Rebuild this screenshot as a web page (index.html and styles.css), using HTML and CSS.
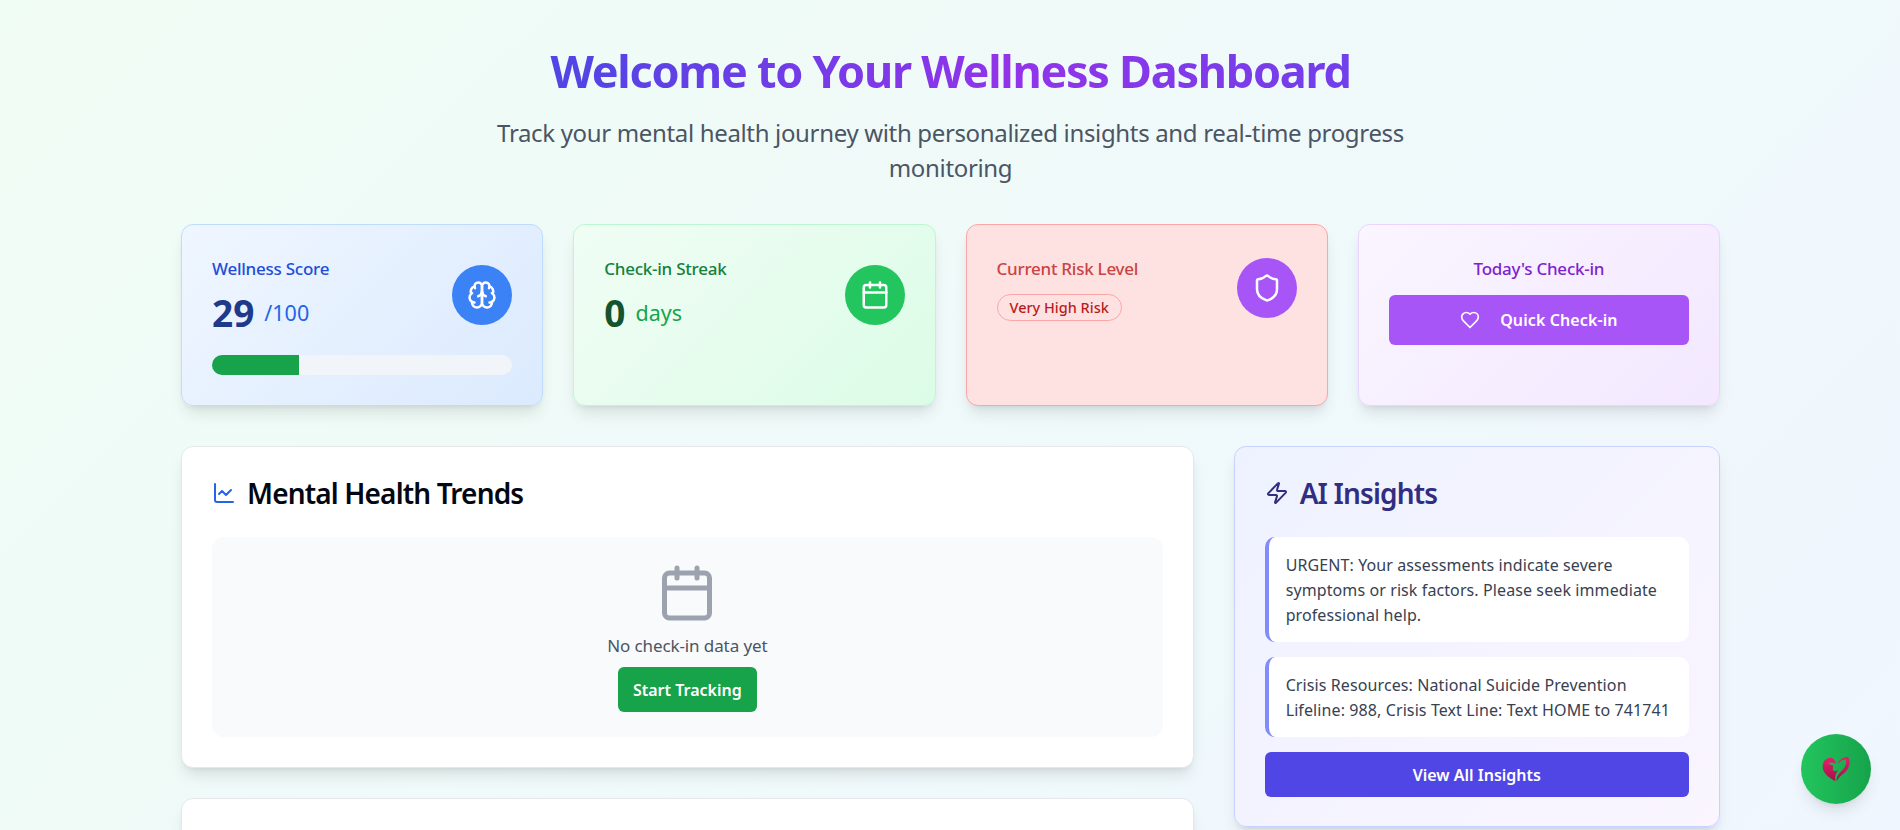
FILE: index.html
```html
<!DOCTYPE html>
<html lang="en">
<head>
    <meta charset="UTF-8">
    <meta name="viewport" content="width=device-width, initial-scale=1.0">
    <title>Wellness Dashboard</title>
    <link rel="stylesheet" href="styles.css">
</head>
<body>
    <div class="page">
        <div class="hero">
            <h1 class="hero-title">Welcome to Your Wellness Dashboard</h1>
            <p class="hero-sub">Track your mental health journey with personalized insights and real-time progress monitoring</p>
        </div>

        <div class="stats">
            <div class="stat stat-blue">
                <div class="stat-top">
                    <div>
                        <div class="stat-label">Wellness Score</div>
                        <div class="stat-value"><strong>29</strong><span>/100</span></div>
                    </div>
                    <div class="stat-icon">
                        <svg viewBox="0 0 24 24"><path d="M12 5a3 3 0 1 0-5.997.125 4 4 0 0 0-2.526 5.77 4 4 0 0 0 .556 6.588A4 4 0 1 0 12 18Z"/><path d="M12 5a3 3 0 1 1 5.997.125 4 4 0 0 1 2.526 5.77 4 4 0 0 1-.556 6.588A4 4 0 1 1 12 18Z"/><path d="M15 13a4.5 4.5 0 0 1-3-4 4.5 4.5 0 0 1-3 4"/><path d="M17.599 6.5a3 3 0 0 0 .399-1.375"/><path d="M6.003 5.125A3 3 0 0 0 6.401 6.5"/><path d="M3.477 10.896a4 4 0 0 1 .585-.396"/><path d="M19.938 10.5a4 4 0 0 1 .585.396"/><path d="M6 18a4 4 0 0 1-1.967-.516"/><path d="M19.967 17.484A4 4 0 0 1 18 18"/></svg>
                    </div>
                </div>
                <div class="progress"><div class="progress-fill" style="width: 29%"></div></div>
            </div>

            <div class="stat stat-green">
                <div class="stat-top">
                    <div>
                        <div class="stat-label">Check-in Streak</div>
                        <div class="stat-value"><strong>0</strong><span>days</span></div>
                    </div>
                    <div class="stat-icon">
                        <svg viewBox="0 0 24 24"><path d="M8 2v4"/><path d="M16 2v4"/><rect width="18" height="18" x="3" y="4" rx="2"/><path d="M3 10h18"/></svg>
                    </div>
                </div>
            </div>

            <div class="stat stat-red">
                <div class="stat-top">
                    <div>
                        <div class="stat-label">Current Risk Level</div>
                        <div class="risk-badge">Very High Risk</div>
                    </div>
                    <div class="stat-icon">
                        <svg viewBox="0 0 24 24"><path d="M20 13c0 5-3.500 7.500-7.660 8.950a1 1 0 0 1-.670-.010C7.500 20.500 4 18 4 13V6a1 1 0 0 1 1-1c2 0 4.500-1.200 6.240-2.720a1.170 1.170 0 0 1 1.520 0C14.510 3.810 17 5 19 5a1 1 0 0 1 1 1z"/></svg>
                    </div>
                </div>
            </div>

            <div class="stat stat-purple">
                <div class="stat-label">Today's Check-in</div>
                <button class="checkin-btn">
                    <svg viewBox="0 0 24 24"><path d="M19 14c1.490-1.460 3-3.210 3-5.500A5.500 5.500 0 0 0 16.500 3c-1.760 0-3 .5-4.500 2-1.500-1.500-2.740-2-4.500-2A5.500 5.500 0 0 0 2 8.500c0 2.300 1.500 4.050 3 5.500l7 7Z"/></svg>
                    Quick Check-in
                </button>
            </div>
        </div>

        <div class="columns">
            <div class="main-col">
                <div class="panel">
                    <h2 class="panel-title">
                        <svg class="title-icon icon-blue" viewBox="0 0 24 24"><path d="M3 3v16a2 2 0 0 0 2 2h16"/><path d="m19 9-5 5-4-4-3 3"/></svg>
                        Mental Health Trends
                    </h2>
                    <div class="empty">
                        <svg class="empty-icon" viewBox="0 0 24 24"><path d="M8 2v4"/><path d="M16 2v4"/><rect width="18" height="18" x="3" y="4" rx="2"/><path d="M3 10h18"/></svg>
                        <p class="empty-text">No check-in data yet</p>
                        <button class="track-btn">Start Tracking</button>
                    </div>
                </div>
                <div class="panel panel-next"></div>
            </div>

            <div class="insights">
                <h2 class="panel-title insights-title">
                    <svg class="title-icon" viewBox="0 0 24 24"><path d="M4 14a1 1 0 0 1-.780-1.630l9.900-10.200a.5.5 0 0 1 .860.460l-1.920 6.020A1 1 0 0 0 13 10h7a1 1 0 0 1 .780 1.630l-9.900 10.200a.5.5 0 0 1-.860-.460l1.920-6.020A1 1 0 0 0 11 14z"/></svg>
                    AI Insights
                </h2>
                <div class="insight">URGENT: Your assessments indicate severe symptoms or risk factors. Please seek immediate professional help.</div>
                <div class="insight">Crisis Resources: National Suicide Prevention Lifeline: 988, Crisis Text Line: Text HOME to 741741</div>
                <button class="insights-btn">View All Insights</button>
            </div>
        </div>
    </div>

    <button class="chat-fab">
        <svg viewBox="20 20 86 76">
            <defs>
                <linearGradient id="heartGrad" x1="0" y1="0" x2="0" y2="1">
                    <stop offset="0" stop-color="#e3206a"/>
                    <stop offset="1" stop-color="#a01248"/>
                </linearGradient>
            </defs>
            <path fill="url(#heartGrad)" d="M45 25C30 25 22 38 22 52C22 70 42 85 60 94C57 82 60 72 68 62C60 66 54 64 52 60L53 48L38 42C44 38 52 38 62 42C58 30 52 25 45 25Z"/>
            <path fill="url(#heartGrad)" d="M66 44C72 30 84 22 96 22C104 30 104 46 96 58C88 72 70 78 64 94C62 82 70 72 80 62C90 52 94 40 90 30C80 30 72 36 66 44Z"/>
        </svg>
    </button>
</body>
</html>
```

FILE: styles.css
```css
* {
    box-sizing: border-box;
}

body {
    margin: 0;
    height: 830px;
    overflow: hidden;
    font-family: 'Noto Sans', sans-serif;
    background: linear-gradient(135deg, #f0fdf4, #eff6ff);
    color: #111827;
}

svg {
    fill: none;
    stroke: currentColor;
    stroke-width: 2;
    stroke-linecap: round;
    stroke-linejoin: round;
}

.page {
    width: 1539px;
    margin-left: 181px;
    padding-top: 41px;
}

.hero {
    text-align: center;
    margin-bottom: 39px;
}

.hero-title {
    margin: 0 auto 14px;
    width: fit-content;
    font-size: 45px;
    line-height: 60px;
    font-weight: 700;
    letter-spacing: -1.27px;
    background: linear-gradient(90deg, #4f46e5, #9333ea 58%, #7040ea);
    -webkit-background-clip: text;
    background-clip: text;
    color: transparent;
}

.hero-sub {
    margin: 0 auto;
    max-width: 960px;
    font-size: 24px;
    line-height: 35px;
    letter-spacing: -0.34px;
    color: #4b5563;
}

.stats {
    display: grid;
    grid-template-columns: repeat(4, 1fr);
    gap: 30px;
    margin-bottom: 40px;
}

.stat {
    height: 182px;
    padding: 30px;
    border-radius: 12px;
    border: 1px solid;
    box-shadow: 0 10px 15px -3px rgba(0, 0, 0, 0.1), 0 4px 6px -4px rgba(0, 0, 0, 0.1);
}

.stat-blue {
    background: linear-gradient(135deg, #eff6ff, #dbeafe);
    border-color: #bfdbfe;
}

.stat-green {
    background: linear-gradient(135deg, #f0fdf4, #dcfce7);
    border-color: #bbf7d0;
}

.stat-red {
    background: #fee2e2;
    border-color: #fca5a5;
}

.stat-purple {
    background: linear-gradient(135deg, #faf5ff, #f3e8ff);
    border-color: #e9d5ff;
    text-align: center;
}

.stat-top {
    display: flex;
    justify-content: space-between;
    align-items: center;
}

.stat-label {
    font-size: 17px;
    line-height: 28px;
    font-weight: 500;
    letter-spacing: -0.25px;
}

.stat-blue .stat-label { color: #1d4ed8; }
.stat-green .stat-label { color: #15803d; }
.stat-red .stat-label { color: #c94444; }
.stat-purple .stat-label { color: #7e22ce; }

.stat-value {
    display: flex;
    align-items: center;
    gap: 10px;
    height: 44px;
    margin-top: 8px;
    line-height: 44px;
}

.stat-value strong {
    font-size: 37px;
    font-weight: 700;
}

.stat-value span {
    font-size: 21.5px;
}

.stat-blue .stat-value strong { color: #1e3a8a; }
.stat-blue .stat-value span { color: #2563eb; }
.stat-green .stat-value strong { color: #14532d; }
.stat-green .stat-value span { color: #16a34a; }

.stat-icon {
    width: 60px;
    height: 60px;
    border-radius: 50%;
    display: flex;
    align-items: center;
    justify-content: center;
    color: #fff;
}

.stat-icon svg {
    width: 30px;
    height: 30px;
}

.stat-blue .stat-icon { background: #3b82f6; }
.stat-green .stat-icon { background: #22c55e; }
.stat-red .stat-icon { background: #a855f7; }

.progress {
    height: 20px;
    margin-top: 20px;
    background: #f1f5f9;
    border-radius: 10px;
    overflow: hidden;
}

.progress-fill {
    height: 100%;
    background: #16a34a;
}

.risk-badge {
    width: fit-content;
    margin-top: 11px;
    padding: 0 12px;
    height: 27px;
    line-height: 25px;
    font-size: 14.5px;
    font-weight: 500;
    color: #b91c1c;
    border: 1px solid #fca5a5;
    border-radius: 14px;
}

.checkin-btn {
    display: flex;
    align-items: center;
    justify-content: center;
    gap: 20px;
    width: 100%;
    height: 50px;
    margin-top: 12px;
    border: none;
    border-radius: 6px;
    background: #a855f7;
    color: #fff;
    font-family: inherit;
    font-size: 16px;
    font-weight: 600;
    letter-spacing: 0.1px;
}

.checkin-btn svg {
    width: 20px;
    height: 20px;
}

.columns {
    display: grid;
    grid-template-columns: repeat(3, 1fr);
    gap: 40px;
}

.main-col {
    grid-column: span 2;
    display: flex;
    flex-direction: column;
    gap: 30px;
}

.panel {
    background: #fff;
    border: 1px solid #e5e7eb;
    border-radius: 12px;
    padding: 30px;
    box-shadow: 0 10px 15px -3px rgba(0, 0, 0, 0.1), 0 4px 6px -4px rgba(0, 0, 0, 0.1);
}

.panel-next {
    height: 200px;
}

.panel-title {
    display: flex;
    align-items: center;
    gap: 11px;
    margin: -2px 0 26px;
    font-size: 28px;
    line-height: 36px;
    font-weight: 600;
    letter-spacing: -0.85px;
    color: #030712;
}

.title-icon {
    width: 24px;
    height: 24px;
}

.icon-blue {
    color: #2563eb;
}

.empty {
    display: flex;
    flex-direction: column;
    align-items: center;
    height: 200px;
    padding-top: 26px;
    background: #f9fafb;
    border-radius: 12px;
}

.empty-icon {
    width: 60px;
    height: 60px;
    color: #9ca3af;
}

.empty-text {
    margin: 9px 0 7px;
    font-size: 17px;
    line-height: 28px;
    letter-spacing: -0.1px;
    color: #4b5563;
}

.track-btn {
    width: 139px;
    height: 45px;
    border: none;
    border-radius: 6px;
    background: #16a34a;
    color: #fff;
    font-family: inherit;
    font-size: 16px;
    font-weight: 600;
}

.insights {
    height: 381px;
    padding: 30px;
    border: 1px solid #c7d2fe;
    border-radius: 12px;
    background: linear-gradient(135deg, #eef2ff, #faf5ff);
    box-shadow: 0 10px 15px -3px rgba(0, 0, 0, 0.1), 0 4px 6px -4px rgba(0, 0, 0, 0.1);
}

.insights-title {
    color: #312e81;
}

.insight {
    padding: 16px 3px 14px 17px;
    margin-bottom: 15px;
    background: #fff;
    border-left: 4px solid #818cf8;
    border-radius: 10px;
    font-size: 16px;
    line-height: 25px;
    letter-spacing: 0.1px;
    color: #374151;
}

.insights-btn {
    width: 100%;
    height: 45px;
    border: none;
    border-radius: 6px;
    background: #4f46e5;
    color: #fff;
    font-family: inherit;
    font-size: 16px;
    font-weight: 600;
}

.chat-fab {
    position: fixed;
    right: 29px;
    bottom: 26px;
    width: 70px;
    height: 70px;
    border: none;
    border-radius: 50%;
    background: linear-gradient(90deg, #22c55e, #16a34a);
    box-shadow: 0 10px 15px -3px rgba(0, 0, 0, 0.1), 0 4px 6px -4px rgba(0, 0, 0, 0.1);
    display: flex;
    align-items: center;
    justify-content: center;
    padding: 0;
}

.chat-fab svg {
    width: 29px;
    height: 26px;
    stroke: none;
}
```
